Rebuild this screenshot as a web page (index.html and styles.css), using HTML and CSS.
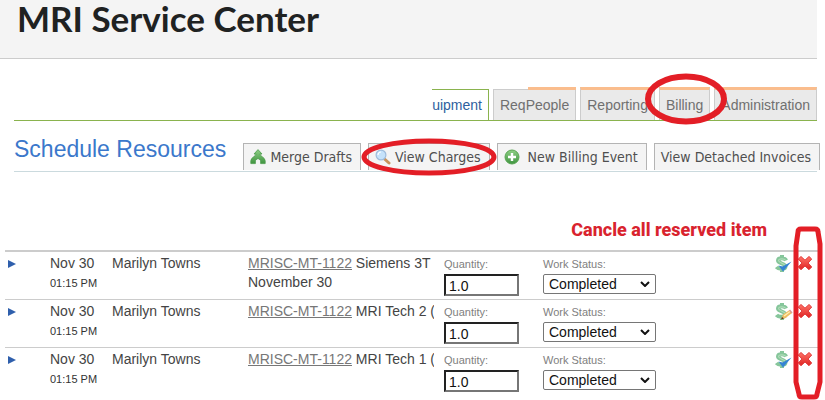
FILE: index.html
```html
<!DOCTYPE html>
<html lang="en">
<head>
<meta charset="utf-8">
<title>MRI Service Center</title>
<link rel="stylesheet" href="styles.css">
</head>
<body>
<svg class="defs" aria-hidden="true">
  <defs>
    <linearGradient id="green" x1="0" y1="0" x2="0" y2="1"><stop offset="0" stop-color="#8fcf85"/><stop offset="1" stop-color="#3f9440"/></linearGradient>
    <linearGradient id="red" x1="0" y1="0" x2="0" y2="1"><stop offset="0" stop-color="#ff7468"/><stop offset="1" stop-color="#df2222"/></linearGradient>
    <symbol id="dollar" viewBox="0 0 18 18">
      <path d="M11 5.500C10 2.600 3 2.600 3 5.600S10.500 8.400 10.500 11.400 3.200 14.400 1.500 12M7 0v4M7 13v4" fill="none" stroke="#86c69b" stroke-width="4"/>
      <path d="M10.500 5.200C9.500 3.300 3.500 3.300 3.500 5.600S10 8.500 10.500 11" fill="none" stroke="#b0dcb8" stroke-width="1.200"/>
    </symbol>
    <symbol id="cross" viewBox="0 0 16 16">
      <path d="M4 1.500 8 5.200l4-3.700 2.700 2.500-3.600 4 3.600 4-2.700 2.700L8 11l-4 3.700L1.300 12l3.600-4-3.600-4z" fill="url(#red)" stroke="#e23a3a" stroke-linejoin="round"/>
    </symbol>
  </defs>
</svg>

<header class="banner"><h1>MRI Service Center</h1></header>

<nav class="tabs">
  <a class="tab tab-active" href="#equipment">uipment</a>
  <a class="tab tab-people" href="#people">ReqPeople</a>
  <a class="tab tab-accent" href="#reporting">Reporting</a>
  <a class="tab tab-accent" href="#billing">Billing<svg class="mark mark-billing" viewBox="0 0 84 52"><ellipse cx="42" cy="26" rx="38" ry="22.500"/></svg></a>
  <a class="tab tab-accent" href="#administration">Administration</a>
</nav>

<div class="toolbar">
  <h2>Schedule Resources</h2>
  <div class="actions">
    <button type="button" class="action"><svg class="icon" viewBox="0 0 16 16"><path d="M8 .6 12 5H9.900c0 2.400 5.300 3.200 5.300 7v2.600h-4.600V12c0-1.200-1.400-1.600-2.600-2.600-1.200 1-2.600 1.400-2.600 2.600v2.600H.8V12c0-3.800 5.300-4.600 5.300-7H4z" fill="url(#green)" stroke="#4d9c4c" stroke-width=".8"/></svg>Merge Drafts</button>
    <button type="button" class="action"><svg class="icon" viewBox="0 0 16 16"><path d="m9.500 10 4.500 4" stroke="#c9935a" stroke-width="3" stroke-linecap="round"/><circle cx="6" cy="6" r="4.900" fill="#c5e2fa" stroke="#9ebcdc" stroke-width="1.200"/><path d="M3 6a3 3 0 0 1 3-3" fill="none" stroke="#fff" stroke-width="1.200"/></svg>View Charges<svg class="mark mark-charges" viewBox="0 0 138 38"><ellipse cx="69" cy="19" rx="65" ry="16"/></svg></button>
    <button type="button" class="action action-wide"><svg class="icon" viewBox="0 0 16 16"><circle cx="8" cy="8" r="7" fill="url(#green)" stroke="#5aa653"/><path d="M8 4v8M4 8h8" stroke="#fff" stroke-width="2.400"/></svg>New Billing Event</button>
    <button type="button" class="action">View Detached Invoices</button>
  </div>
</div>

<main>
  <p class="note">Cancle all reserved item</p>
  <div class="list">
  <table>
    <colgroup><col class="c-arrow"><col class="c-date"><col class="c-name"><col class="c-item"><col class="c-qty"><col><col class="c-icon"><col class="c-icon"></colgroup>
    <tbody>
    <tr>
      <td><button type="button" class="plain" aria-label="Expand"><svg class="arrow" viewBox="0 0 8 8"><path d="M0 0 8 4 0 8z"/></svg></button></td>
      <td>Nov 30<small>01:15 PM</small></td>
      <td>Marilyn Towns</td>
      <td><div class="item"><a href="#r1">MRISC-MT-1122</a> Siemens 3T<br>November 30</div></td>
      <td><label for="q1">Quantity:</label><input id="q1" type="text" value="1.0"></td>
      <td><label for="s1">Work Status:</label><span class="pick"><select id="s1"><option>Completed</option></select><svg viewBox="0 0 10 6"><path d="m1 1 4 4 4-4"/></svg></span></td>
      <td><button type="button" class="plain" aria-label="Charge confirmed"><svg class="money" viewBox="0 0 18 18"><use href="#dollar"/><path d="m3.500 10.500 4 1L16.500 6.500 8 16.500z" fill="#3483d3"/></svg></button></td>
      <td><button type="button" class="plain" aria-label="Cancel"><svg class="icon" viewBox="0 0 16 16"><use href="#cross"/></svg></button></td>
    </tr>
    <tr>
      <td><button type="button" class="plain" aria-label="Expand"><svg class="arrow" viewBox="0 0 8 8"><path d="M0 0 8 4 0 8z"/></svg></button></td>
      <td>Nov 30<small>01:15 PM</small></td>
      <td>Marilyn Towns</td>
      <td><div class="item"><a href="#r2">MRISC-MT-1122</a> MRI Tech 2 (</div></td>
      <td><label for="q2">Quantity:</label><input id="q2" type="text" value="1.0"></td>
      <td><label for="s2">Work Status:</label><span class="pick"><select id="s2"><option>Completed</option></select><svg viewBox="0 0 10 6"><path d="m1 1 4 4 4-4"/></svg></span></td>
      <td><button type="button" class="plain" aria-label="Edit charge"><svg class="money" viewBox="0 0 18 18"><use href="#dollar"/><path d="m6 16.500 2-5 6.500-4.500 2.500 3-6.500 5z" fill="#efbd62"/><path d="m9 13 6-4.500" stroke="#fff0b5" stroke-width="1.200"/><path d="m6 16.500 1-2.500 2 1.500z" fill="#563b20"/><path d="m14.500 7 2.500 3" stroke="#d9a199" stroke-width="1.500"/></svg></button></td>
      <td><button type="button" class="plain" aria-label="Cancel"><svg class="icon" viewBox="0 0 16 16"><use href="#cross"/></svg></button></td>
    </tr>
    <tr>
      <td><button type="button" class="plain" aria-label="Expand"><svg class="arrow" viewBox="0 0 8 8"><path d="M0 0 8 4 0 8z"/></svg></button></td>
      <td>Nov 30<small>01:15 PM</small></td>
      <td>Marilyn Towns</td>
      <td><div class="item"><a href="#r3">MRISC-MT-1122</a> MRI Tech 1 (</div></td>
      <td><label for="q3">Quantity:</label><input id="q3" type="text" value="1.0"></td>
      <td><label for="s3">Work Status:</label><span class="pick"><select id="s3"><option>Completed</option></select><svg viewBox="0 0 10 6"><path d="m1 1 4 4 4-4"/></svg></span></td>
      <td><button type="button" class="plain" aria-label="Charge confirmed"><svg class="money" viewBox="0 0 18 18"><use href="#dollar"/><path d="m3.500 10.500 4 1L16.500 6.500 8 16.500z" fill="#3483d3"/></svg></button></td>
      <td><button type="button" class="plain" aria-label="Cancel"><svg class="icon" viewBox="0 0 16 16"><use href="#cross"/></svg></button></td>
    </tr>
    </tbody>
  </table>
  <svg class="mark mark-cancel" viewBox="0 0 30 174"><path d="M8 3h14q3 0 3 3l2 12v138l-3 12q0 3-3 3H9q-3 0-3-3L3 156V20L5 6q0-3 3-3z"/></svg>
  </div>
</main>
</body>
</html>
```
FILE: styles.css
```css
* { box-sizing: border-box; }
body {
  margin: 0;
  min-height: 100vh;
  background: #fff;
  color: #444;
  font: 14px/19px "Liberation Sans", Arial, sans-serif;
}
h1, h2, p { margin: 0; }
button, input, select { font: inherit; }
button { cursor: pointer; }
.defs { position: absolute; width: 0; height: 0; }

.banner {
  margin-right: 8px;
  padding-bottom: 22px;
  background: #f4f4f4;
  border-bottom: 1px solid #ccc;
}
h1 {
  padding-left: 17px;
  color: #1f2222;
  font: 700 35px/36px Lato, sans-serif;
}

.tabs {
  display: flex;
  justify-content: flex-end;
  align-items: flex-end;
  gap: 4px;
  margin: 28px 8px 0 14px;
  border-bottom: 1px solid #8ab34e;
}
.tab {
  position: relative;
  padding: 6px 6px 5px;
  border: 1px solid #ccc;
  border-bottom: 0;
  background: #eaeaea;
  color: #707070;
  text-decoration: none;
}
.tab-active {
  padding-left: 0;
  border-color: #8ab34e;
  border-left: 0;
  background: #fff;
  color: #2e5f9e;
}
.tab-accent { border-top: 3px solid #fabd8d; }
.tab-people::before {
  content: "";
  position: absolute;
  top: -3px;
  left: 34px;
  right: -1px;
  height: 3px;
  background: #fabd8d;
}

.toolbar {
  display: flex;
  justify-content: space-between;
  margin: 13px 8px 0 14px;
  border-bottom: 1px solid #cbdade;
}
h2 {
  color: #3b78cb;
  font-size: 23px;
  font-weight: 400;
  line-height: 30px;
}
.actions {
  display: flex;
  gap: 7px;
  margin: 9px -3px 1px 0;
}
.action {
  position: relative;
  display: flex;
  align-items: center;
  gap: 4px;
  height: 27px;
  padding: 0 8px 0 6px;
  border: 1px solid #b4b4b4;
  border-bottom: 0;
  background: #f4f4f4;
  color: #4f4f4f;
  font: 14px/20px "DejaVu Sans Condensed", "Noto Sans", sans-serif;
  white-space: nowrap;
}
.action-wide { gap: 8px; }
.icon { display: block; width: 16px; height: 16px; }

.mark {
  position: absolute;
  z-index: 1;
  fill: none;
  stroke: #e31e26;
  stroke-width: 6px;
  pointer-events: none;
}
.mark-billing { top: -17px; left: -16px; width: 84px; height: 52px; }
.mark-charges { top: -6px; left: -9px; width: 138px; height: 38px; stroke-width: 5px; }
.mark-cancel { top: -25px; right: -4px; width: 30px; height: 174px; stroke-width: 5px; }

.note {
  padding: 48px 58px 10px 0;
  color: #d9232e;
  font: 800 18px/20px Roboto, sans-serif;
  text-align: right;
}
.list {
  position: relative;
  margin: 0 6px 0 5px;
  border-top: 1px solid #ccc;
}
table {
  width: 100%;
  border-spacing: 0;
  table-layout: fixed;
}
td {
  height: 48px;
  padding: 2px 0 0;
  border-top: 1px solid #ccc;
  vertical-align: top;
}
.c-arrow { width: 45px; }
.c-date { width: 62px; }
.c-name { width: 136px; }
.c-item { width: 196px; }
.c-qty { width: 99px; }
.c-icon { width: 22px; }
.item {
  margin-right: 10px;
  overflow: hidden;
  white-space: nowrap;
}
.item a { color: #777; }
small {
  display: block;
  color: #333;
  font-size: 11px;
  line-height: 20px;
}
label {
  display: block;
  color: #808080;
  font-size: 11px;
  line-height: 20px;
}
input {
  display: block;
  width: 75px;
  height: 22px;
  padding: 1px 3px 0;
  border: 2px solid #767676;
  border-top-color: #222;
  border-left-color: #222;
  background: #fff;
  color: #111;
}
.pick { position: relative; display: block; width: 113px; }
select {
  display: block;
  width: 100%;
  height: 20px;
  padding: 0 5px;
  appearance: none;
  border: 1px solid #767676;
  border-radius: 2px;
  background: #fff;
  color: #111;
}
.pick svg {
  position: absolute;
  top: 7px;
  right: 6px;
  width: 10px;
  height: 6px;
  fill: none;
  stroke: #111;
  stroke-width: 2px;
  pointer-events: none;
}
.plain {
  display: block;
  padding: 1px 0 0;
  border: 0;
  background: none;
}
.arrow {
  display: block;
  width: 8px;
  height: 8px;
  margin: 5px 0 0 3px;
  fill: #2f5fac;
}
.money { display: block; width: 18px; height: 18px; }
```
